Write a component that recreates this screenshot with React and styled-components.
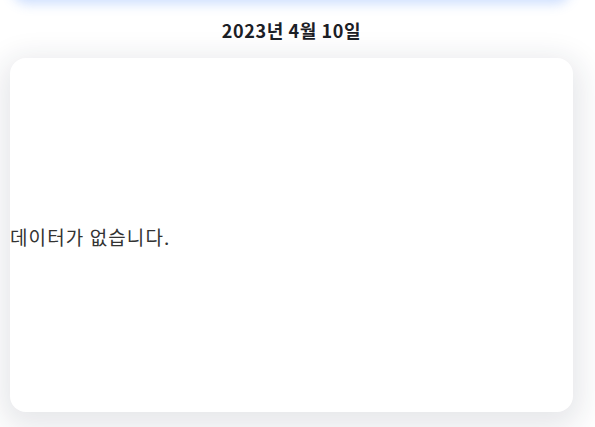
import React from "react";
import styled, { createGlobalStyle } from "styled-components";

const GlobalStyle = createGlobalStyle`
  html, body {
    margin: 0;
    padding: 0;
    background: #ffffff;
    font-family: "Noto Sans CJK KR", "Noto Sans", sans-serif;
    overflow: hidden;
  }
`;

const Page = styled.div`
  width: 583px;
  height: 427px;
  box-sizing: border-box;
  padding: 0 10px;
  display: flex;
  flex-direction: column;
`;

const TopBar = styled.div`
  height: 40px;
  margin: -40px 4px 0;
  border-radius: 14px;
  background: #ffffff;
  box-shadow: 0 2px 12px 2px rgba(80, 140, 250, 0.28);
`;

const DateTitle = styled.h2`
  margin: 0;
  height: 58px;
  display: flex;
  align-items: center;
  justify-content: center;
  padding-top: 2px;
  box-sizing: border-box;
  font-size: 18px;
  font-weight: 700;
  color: #1c2026;
  letter-spacing: 0.6px;
`;

const Card = styled.div`
  height: 354px;
  border-radius: 16px;
  background: #ffffff;
  box-shadow: 0 8px 30px 8px rgba(30, 40, 60, 0.11);
  display: flex;
  align-items: center;
`;

const Empty = styled.p`
  margin: 0;
  padding-top: 2px;
  font-size: 19px;
  font-weight: 400;
  color: #333333;
  letter-spacing: 1.1px;
`;

export default function App() {
  return (
    <>
      <GlobalStyle />
      <Page>
        <TopBar />
        <DateTitle>2023년 4월 10일</DateTitle>
        <Card>
          <Empty>데이터가 없습니다.</Empty>
        </Card>
      </Page>
    </>
  );
}
